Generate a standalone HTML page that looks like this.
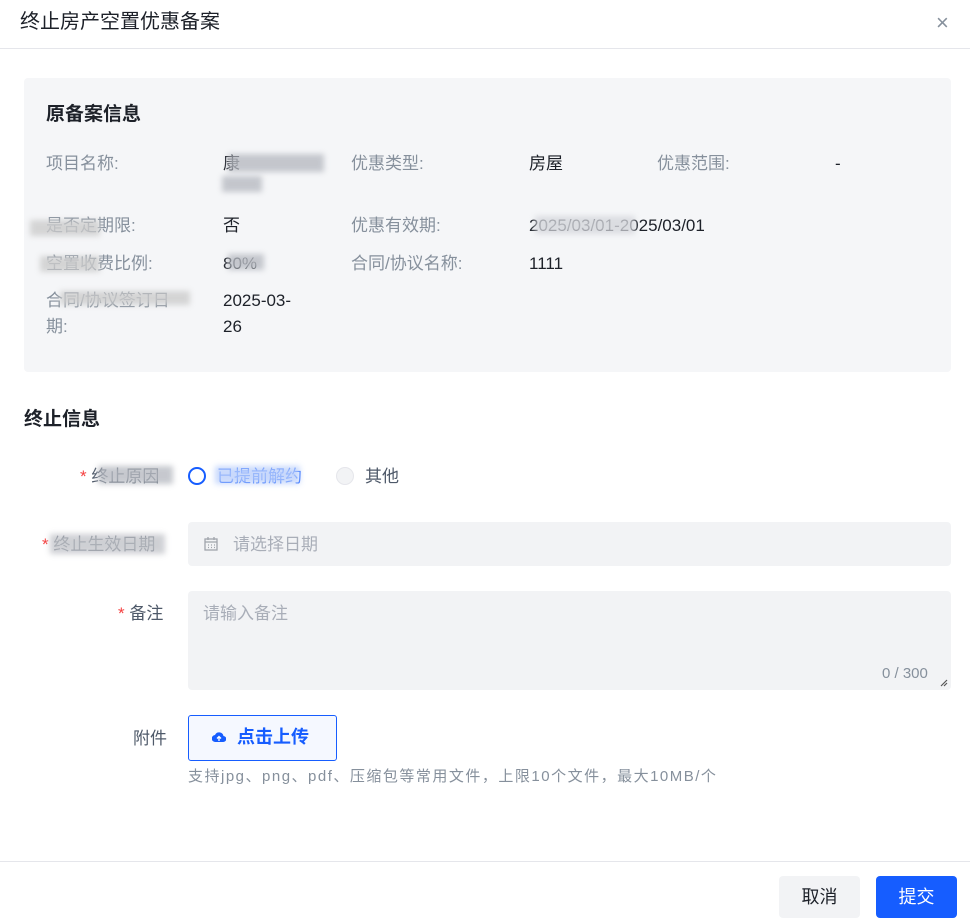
<!DOCTYPE html>
<html><head><meta charset="utf-8"><style>
*{margin:0;padding:0;box-sizing:border-box}
body{width:970px;height:924px;background:#fff;font-family:"Liberation Sans","Noto Sans CJK SC",sans-serif;position:relative;overflow:hidden;color:#1d2129}
.a{position:absolute;white-space:nowrap}
.lb{color:#86909c;font-size:17px;line-height:23px}
.v{color:#1d2129;font-size:17px;line-height:23px}
.blur{position:absolute;background:#b8bbc2;filter:blur(3px);opacity:.8}
.star{color:#f53f3f}
</style></head><body>
<div class="a" style="left:20px;top:8px;font-size:20px;line-height:28px">终止房产空置优惠备案</div>
<div class="a" style="left:936px;top:10px;font-size:22px;color:#86909c">×</div>
<div class="a" style="left:0;top:48px;width:970px;height:1px;background:#e5e6eb"></div>

<div class="a" style="left:24px;top:78px;width:927px;height:294px;background:#f5f6f8;border-radius:4px"></div>
<div class="a" style="left:46px;top:102px;font-size:19px;font-weight:bold;line-height:26px">原备案信息</div>

<div class="a lb" style="left:46px;top:152px">项目名称:</div>
<div class="a v" style="left:223px;top:152px">康</div><div class="blur" style="left:228px;top:154px;width:96px;height:18px"></div><div class="blur" style="left:222px;top:176px;width:40px;height:16px"></div>
<div class="a lb" style="left:351px;top:152px">优惠类型:</div>
<div class="a v" style="left:529px;top:152px">房屋</div>
<div class="a lb" style="left:657px;top:152px">优惠范围:</div>
<div class="a v" style="left:835px;top:152px">-</div>

<div class="a lb" style="left:46px;top:214px">是否定期限:</div><div class="blur" style="left:30px;top:220px;width:70px;height:16px;background:#ccc"></div>
<div class="a v" style="left:223px;top:214px">否</div>
<div class="a lb" style="left:351px;top:214px">优惠有效期:</div>
<div class="a v" style="left:529px;top:214px">2025/03/01-2025/03/01</div><div class="blur" style="left:535px;top:216px;width:100px;height:18px;background:#d5d7dc"></div>

<div class="a lb" style="left:46px;top:252px">空置收费比例:</div><div class="blur" style="left:40px;top:256px;width:60px;height:16px;background:#ccc"></div>
<div class="a v" style="left:223px;top:252px">80%</div><div class="blur" style="left:228px;top:254px;width:36px;height:16px"></div>
<div class="a lb" style="left:351px;top:252px">合同/协议名称:</div>
<div class="a v" style="left:529px;top:252px">1111</div>

<div class="a lb" style="left:46px;top:289px">合同/协议签订日</div><div class="blur" style="left:60px;top:291px;width:130px;height:14px;background:#ccc"></div>
<div class="a lb" style="left:46px;top:315px">期:</div>
<div class="a v" style="left:223px;top:289px">2025-03-</div>
<div class="a v" style="left:223px;top:315px">26</div>

<div class="a" style="left:24px;top:407px;font-size:19px;font-weight:bold;line-height:26px">终止信息</div>

<div class="a" style="left:80px;top:465px;font-size:17px;line-height:23px;color:#4e5969"><span class="star">*</span> 终止原因</div>
<div class="blur" style="left:98px;top:466px;width:75px;height:18px"></div>
<div class="a" style="left:188px;top:467px;width:18px;height:18px;border-radius:50%;border:2px solid #165dff"></div>
<div class="a" style="left:217px;top:465px;font-size:17px;line-height:23px;color:#165dff">已提前解约</div>
<div class="blur" style="left:215px;top:466px;width:85px;height:18px;background:#bcd0fb"></div>
<div class="a" style="left:336px;top:467px;width:18px;height:18px;border-radius:50%;border:1px solid #e5e6eb;background:#f2f3f5"></div>
<div class="a" style="left:365px;top:465px;font-size:17px;line-height:23px;color:#4e5969">其他</div>

<div class="a" style="left:42px;top:533px;font-size:17px;line-height:23px;color:#4e5969"><span class="star">*</span> 终止生效日期</div>
<div class="blur" style="left:50px;top:534px;width:115px;height:20px;background:#c3c5ca"></div>
<div class="a" style="left:188px;top:522px;width:763px;height:44px;background:#f2f3f5;border-radius:4px"></div>
<svg class="a" style="left:204px;top:537px" width="14" height="14" viewBox="0 0 14 14"><rect x="1" y="2" width="12" height="11" fill="none" stroke="#a0a4ab" stroke-width="1.3"/><path d="M1 5h12M4 0v3M10 0v3M4 8h1M7 8h1M10 8h1M4 10.5h1M7 10.5h1M10 10.5h1" stroke="#a0a4ab" stroke-width="1.3"/></svg>
<div class="a" style="left:233px;top:533px;font-size:17px;line-height:23px;color:#a9aeb8">请选择日期</div>

<div class="a" style="left:118px;top:602px;font-size:17px;line-height:23px;color:#4e5969"><span class="star">*</span> 备注</div>
<div class="a" style="left:188px;top:591px;width:763px;height:99px;background:#f2f3f5;border-radius:4px"></div>
<div class="a" style="left:203px;top:602px;font-size:17px;line-height:23px;color:#a9aeb8">请输入备注</div>
<div class="a" style="left:882px;top:664px;font-size:15px;line-height:20px;color:#86909c">0 / 300</div>
<svg class="a" style="left:940px;top:679px" width="8" height="8"><path d="M1 7L7 1M4 7L7 4" stroke="#555" stroke-width="1.2"/></svg>

<div class="a" style="left:133px;top:727px;font-size:17px;line-height:23px;color:#4e5969">附件</div>
<div class="a" style="left:188px;top:715px;width:149px;height:46px;border:1px solid #165dff;border-radius:3px;background:#f5f8ff"></div>
<svg class="a" style="left:212px;top:731px" width="14" height="12" viewBox="0 0 14 12"><path d="M3.5 11A3.5 3.5 0 0 1 3 4a4.5 4.5 0 0 1 8.5 1A3 3 0 0 1 11 11z" fill="#165dff"/><path d="M7 10V6M5 7.5L7 5.5L9 7.5" stroke="#fff" stroke-width="1.3" fill="none"/></svg>
<div class="a" style="left:237px;top:725px;font-size:18px;line-height:24px;color:#165dff;font-weight:bold">点击上传</div>
<div class="a" style="left:188px;top:767px;font-size:15px;line-height:20px;color:#86909c;letter-spacing:1.5px">支持jpg、png、pdf、压缩包等常用文件，上限10个文件，最大10MB/个</div>

<div class="a" style="left:0;top:861px;width:970px;height:1px;background:#e5e6eb"></div>
<div class="a" style="left:779px;top:876px;width:81px;height:42px;background:#f2f3f5;border-radius:4px;font-size:18px;line-height:42px;text-align:center;color:#1d2129">取消</div>
<div class="a" style="left:876px;top:876px;width:81px;height:42px;background:#165dff;border-radius:4px;font-size:18px;line-height:42px;text-align:center;color:#fff">提交</div>
</body></html>
